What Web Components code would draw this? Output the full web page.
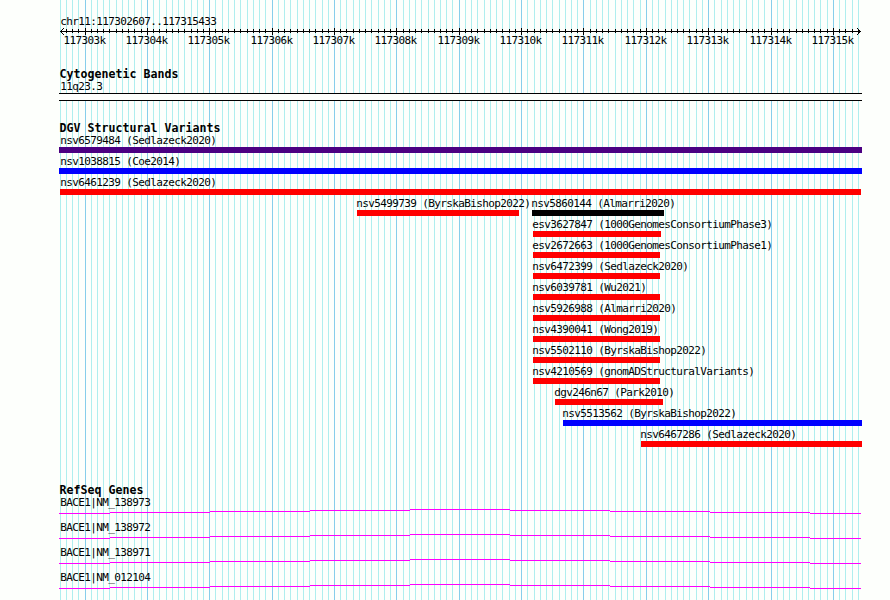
<!DOCTYPE html>
<html lang="en">
<head>
<meta charset="utf-8">
<title>chr11:117302607..117315433</title>
<style>
html,body{margin:0;background:#fdfffc}
body{width:890px;height:600px;overflow:hidden}
</style>
</head>
<body>
<genome-browser></genome-browser>
<script>
const START = 117302607, SCALE = 800 / 12827;
const px = p => Math.round((p - START) * SCALE) + 60;

const define = (name, render) => customElements.define(name, class extends HTMLElement {
  connectedCallback() {
    if (!this.shadowRoot) this.attachShadow({mode: 'open'}).innerHTML = render(this);
  }
});

/* Fixed-pitch label: 6px cells, or 7px cells when bold */
define('map-text', el => `<style>
  :host{display:block;height:12px;line-height:12px;white-space:pre;color:#000;
    font-family:"DejaVu Sans Mono","Liberation Mono",monospace;font-size:11px;letter-spacing:-.6226px}
  :host([bold]){font-size:11.6px;font-weight:bold;letter-spacing:.016px}
</style><slot></slot>`);

/* Vertical position lines behind every track */
define('map-grid', () => {
  let s = '';
  for (let p = 117302600; p <= 117315433; p += 100)
    s += `<rect x="${px(p)}" y="0" width="1" height="600" fill="${p % 1000 ? '#afeeee' : '#87ceeb'}"/>`;
  return `<style>:host{display:block;position:absolute;inset:0}svg{display:block}</style>
    <svg width="890" height="600" shape-rendering="crispEdges">${s}</svg>`;
});

define('map-ruler', () => {
  let t = '', l = '';
  for (let p = 117302700; p <= 117315400; p += 100) {
    const major = p % 1000 === 0;
    t += `<rect x="${px(p)}" y="${major ? 1 : 2}" width="1" height="${major ? 7 : 4}"/>`;
    if (major) l += `<map-text style="left:${px(p) - 21.5}px">${p / 1000}k</map-text>`;
  }
  return `<style>:host{display:block;position:relative;height:41px;margin-top:-1px}
      svg{display:block}map-text{position:absolute;top:8px}</style>
    <svg width="890" height="9" shape-rendering="crispEdges"><rect x="60" y="4" width="801" height="1"/>${t}
    <path d="M61 3h1v-1h1v-1h1v1h-1v1h-1v1h-1zM61 5h1v1h1v1h1v1h-1v-1h-1v-1h-1zM860 3h-1v-1h-1v-1h-1v1h1v1h1v1h1zM860 5h-1v1h-1v1h-1v1h1v-1h1v-1h1z"/></svg>${l}`;
});

define('cyto-band', () => `<style>:host{display:block;box-sizing:border-box;margin-left:59px;width:803px;height:8px;
  border:solid #000;border-width:1px 0;background:#fdfffc}</style>`);

/* One row of variants, each given as x, end, colour and name */
define('variant-row', el => `<style>
  :host{display:grid;grid-template-columns:890px;height:21px}
  .v{grid-area:1/1;display:flex;flex-direction:column}
  i{display:block;height:6px}</style>` +
  JSON.parse(el.getAttribute('items')).map(([a, b, c, n, dx]) =>
    `<div class="v" style="margin-left:${a}px"><map-text style="margin:1px 0 0 ${dx}px">${n}</map-text><i style="width:${b - a}px;background:${c}"></i></div>`).join(''));

define('gene-row', el => {
  const seg = [[59,110,4],[110,210,3],[210,310,2],[310,410,1],[410,510,0],[510,610,1],[610,710,2],[710,810,3],[810,861,4]];
  return `<style>:host{display:block;height:25px}map-text{margin-left:60.3px}svg{display:block}</style>
    <map-text><slot></slot></map-text><svg width="890" height="6" shape-rendering="crispEdges">${
    seg.map(([a, b, y]) => `<rect x="${a}" y="${y}" width="${b - a}" height="1" fill="#f0f"/>`).join('')}</svg>`;
});

define('genome-browser', () => {
  const R = '#f00', B = '#00f';
  const rows = [
    [[59,862,'#4b0082','nsv6579484 (Sedlazeck2020)',1.3]],
    [[59,862,B,'nsv1038815 (Coe2014)',1.3]],
    [[60,861,R,'nsv6461239 (Sedlazeck2020)',0.3]],
    [[357,519,R,'nsv5499739 (ByrskaBishop2022)',-.7],[532,664,'#000','nsv5860144 (Almarri2020)',-.7]],
    [[533,661,R,'esv3627847 (1000GenomesConsortiumPhase3)',-.7]],
    [[533,660,R,'esv2672663 (1000GenomesConsortiumPhase1)',-.7]],
    [[533,660,R,'nsv6472399 (Sedlazeck2020)',-.7]],
    [[533,660,R,'nsv6039781 (Wu2021)',-.7]],
    [[533,660,R,'nsv5926988 (Almarri2020)',-.7]],
    [[533,660,R,'nsv4390041 (Wong2019)',-.7]],
    [[533,660,R,'nsv5502110 (ByrskaBishop2022)',-.7]],
    [[533,660,R,'nsv4210569 (gnomADStructuralVariants)',-.7]],
    [[555,663,R,'dgv246n67 (Park2010)',-.7]],
    [[563,862,B,'nsv5513562 (ByrskaBishop2022)',-.7]],
    [[641,862,R,'nsv6467286 (Sedlazeck2020)',-.7]]
  ];
  return `<style>
    :host{display:block;position:relative;width:890px;height:600px;overflow:hidden}
    main{position:relative;display:flex;flex-direction:column;padding-top:16px}
    .t{margin-left:60.3px}
    .t[bold]{margin-left:59.5px}
  </style><map-grid></map-grid><main>
    <map-text class="t">chr11:117302607..117315433</map-text>
    <map-ruler></map-ruler>
    <map-text bold class="t">Cytogenetic Bands</map-text>
    <map-text class="t" style="margin-top:1px">11q23.3</map-text>
    <cyto-band></cyto-band>
    <map-text bold class="t" style="margin-top:21px">DGV Structural Variants</map-text>
    <div>${rows.map(r => `<variant-row items='${JSON.stringify(r)}'></variant-row>`).join('')}</div>
    <map-text bold class="t" style="margin-top:35px">RefSeq Genes</map-text>
    <div style="padding-top:1px">${['138973','138972','138971','012104'].map(n => `<gene-row>BACE1|NM_${n}</gene-row>`).join('')}</div>
  </main>`;
});
</script>
</body>
</html>
